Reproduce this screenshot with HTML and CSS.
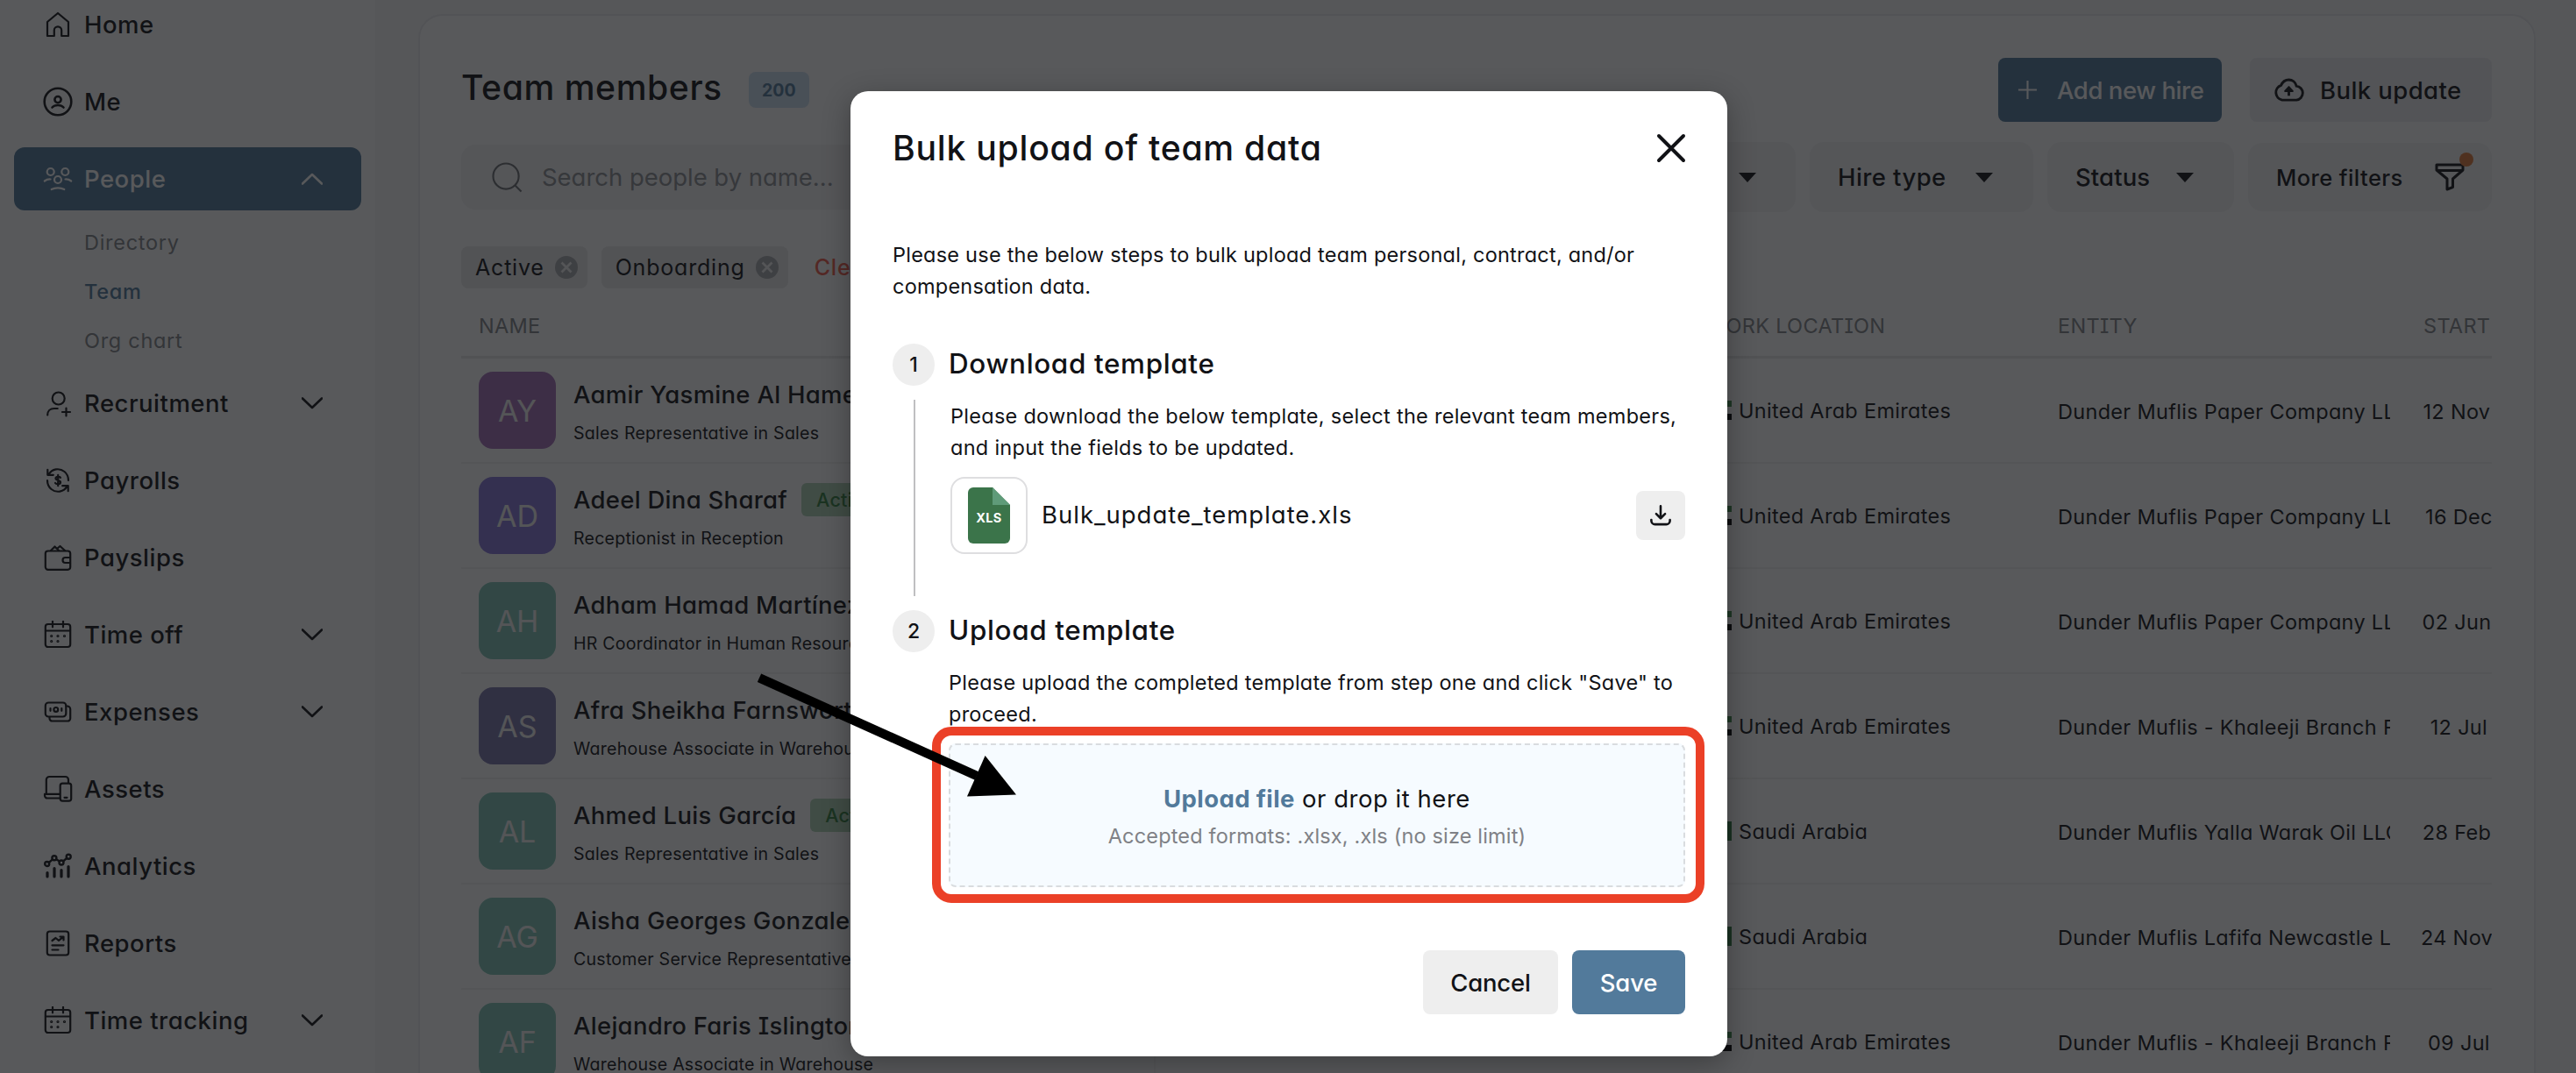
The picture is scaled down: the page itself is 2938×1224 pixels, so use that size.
FILE: index.html
```html
<!DOCTYPE html>
<html lang="en">
<head>
<meta charset="utf-8">
<title>Team members</title>
<link rel="stylesheet" href="styles.css">
</head>
<body>
<svg class="sprite" aria-hidden="true">
  <symbol id="chev-down" viewBox="0 0 24 14"><path d="M1 1.500l11 10.500 11-10.500" stroke-width="2.600"/></symbol>
  <symbol id="chev-up" viewBox="0 0 24 14"><path d="M1 12.500l11-10.500 11 10.500" stroke-width="2.600"/></symbol>
  <symbol id="calendar" viewBox="0 0 32 32"><rect x="1.800" y="4" width="28.400" height="26" rx="3"/><path d="M2 11.500h28M10 .8v6.500M22 .8v6.500"/><g stroke-width="1.200"><circle cx="8.700" cy="17.500" r="1"/><circle cx="16" cy="17.500" r="1"/><circle cx="23.500" cy="17.500" r="1"/><circle cx="8.700" cy="23.500" r="1"/><circle cx="16" cy="23.500" r="1"/></g></symbol>
  <symbol id="remove" viewBox="0 0 26 26"><circle class="remove-disc" cx="13" cy="13" r="13"/><path d="M7.500 7.500l11 11M18.500 7.500l-11 11" stroke="#f1f1f2" stroke-width="2.800"/></symbol>
</svg>

<div class="app">
  <nav class="sidebar">
    <a class="item"><svg class="ico" viewBox="0 0 32 32"><path d="M4 29V13L16 3l12 10v16h-7.800v-6.500a4.200 4.200 0 0 0-8.400 0V29z"/></svg><span>Home</span></a>
    <a class="item"><svg class="ico" viewBox="0 0 32 32"><g stroke-width="2.600"><circle cx="16" cy="16" r="15.300"/><circle cx="16" cy="13.600" r="3.600"/><path d="M9.500 22.500c3-3.300 10-3.300 13 0"/></g></svg><span>Me</span></a>
    <a class="item active"><svg class="ico" viewBox="0 0 32 32"><circle cx="7.700" cy="8" r="4"/><circle cx="24.300" cy="8" r="4"/><circle cx="16" cy="17" r="4"/><path d="M.8 18.500c2-1.500 4-2.200 6.700-2M31.200 18.500c-2-1.500-4-2.200-6.700-2M8.700 28c4-2.300 10.600-2.300 14.600 0"/></svg><span>People</span><svg class="chev"><use href="#chev-up"/></svg></a>
    <div class="sub">
      <a>Directory</a>
      <a class="current">Team</a>
      <a>Org chart</a>
    </div>
    <a class="item"><svg class="ico" viewBox="0 0 32 32"><circle cx="16.700" cy="10.500" r="7"/><path d="M4.200 29.500c0-4.500 3-7.500 7.500-7.500h4M25.500 21.500v9M21 26h9"/></svg><span>Recruitment</span><svg class="chev"><use href="#chev-down"/></svg></a>
    <a class="item"><svg class="ico" viewBox="0 0 32 32"><path d="M5.500 9.500C9 2.500 18 1.500 23.500 6c3 2.500 4.500 6 4.500 10M26.500 22.500c-3.500 7-12.500 8-18 3.500-3-2.500-4.500-6-4.500-10M4.300 3.800v6h6.500M27.700 28.200v-6h-6.500"/><path d="M19 12.800c-.8-1.300-5.500-1.500-5.500 1 0 2.600 5.500 1.600 5.500 4.400 0 2.500-5 2.400-6 .8M16.200 9.800v12.400"/></svg><span>Payrolls</span></a>
    <a class="item"><svg class="ico" viewBox="0 0 32 32"><rect x="1.800" y="8.500" width="28.400" height="21.300" rx="3"/><path d="M30 16h-5.500a2.900 2.900 0 0 0 0 6H30M8 8l4.500-4.500L17 8M15.500 5.500l3-2.500L24 8"/></svg><span>Payslips</span></a>
    <a class="item"><svg class="ico"><use href="#calendar"/></svg><span>Time off</span><svg class="chev"><use href="#chev-down"/></svg></a>
    <a class="item"><svg class="ico" viewBox="0 0 32 32"><rect x="1.800" y="5.500" width="23.500" height="16" rx="3.500"/><path d="M25.500 9.500h1.200a3.500 3.500 0 0 1 3.500 3.500v10.500a3 3 0 0 1-3 3H9.500a3 3 0 0 1-3-3v-1.500M7.500 12v2.800M20.300 12v2.800"/><circle cx="13.800" cy="13.400" r="2.400"/></svg><span>Expenses</span><svg class="chev"><use href="#chev-down"/></svg></a>
    <a class="item"><svg class="ico" viewBox="0 0 32 32"><path d="M2.800 21.500V5.500a3.500 3.500 0 0 1 3.500-3.500h18.200a3.500 3.500 0 0 1 3.500 3.500v3M18 21.800H1v1.700a3 3 0 0 0 3 3h14.500"/><rect x="18.700" y="9.700" width="12.500" height="20" rx="2.600"/><path d="M23.500 25.800h3"/></svg><span>Assets</span></a>
    <a class="item"><svg class="ico" viewBox="0 0 32 32"><g stroke-width="2.400"><circle cx="3.700" cy="13.500" r="2.500"/><circle cx="11.900" cy="6.800" r="2.500"/><circle cx="20" cy="12" r="2.500"/><circle cx="28.200" cy="5.300" r="2.500"/><path d="M5.700 12l4.200-3.600M14.200 8.200l3.700 2.400M22 10.500l4.200-3.600"/></g><path stroke-width="3.200" d="M4 23.500V28M12 18.500V28M20 20.500V28M28 16.500V28"/></svg><span>Analytics</span></a>
    <a class="item"><svg class="ico" viewBox="0 0 32 32"><rect x="3.800" y="2.500" width="24.400" height="27" rx="3"/><path d="M9.500 13l4-3 3.500 2.800 5-4M18.500 8.500h4v4M9.500 18.300h13M9.500 23.500h7"/></svg><span>Reports</span></a>
    <a class="item"><svg class="ico"><use href="#calendar"/></svg><span>Time tracking</span><svg class="chev"><use href="#chev-down"/></svg></a>
  </nav>

  <main class="card">
    <header class="top">
      <h1>Team members</h1>
      <span class="count">200</span>
      <button class="btn primary"><svg class="plus" viewBox="0 0 24 24"><path d="M12 1v22M1 12h22"/></svg><span class="t-add">Add new hire</span></button>
      <button class="btn grey"><svg class="cloud" viewBox="0 0 38 28"><path d="M11 26a9 9 0 0 1-1.300-17.300C11.500 4.500 15 2 19 2s8 2.800 9 7.500A8.300 8.300 0 0 1 28 26z"/><path d="M19 21v-8"/><path class="solid" d="M14.500 15.500L19 10.500l4.500 5z"/></svg><span class="t-bulk">Bulk update</span></button>
    </header>

    <div class="filters">
      <div class="search"><svg class="lens" viewBox="0 0 36 36"><circle cx="16.500" cy="16.500" r="15"/><path d="M27 27l7.500 7.500"/></svg><span>Search people by name...</span></div>
      <div class="select entity"><span>Entity</span><i class="caret"></i></div>
      <div class="select hire"><span>Hire type</span><i class="caret"></i></div>
      <div class="select status"><span>Status</span><i class="caret"></i></div>
      <div class="more"><span>More filters</span><span class="funnel-wrap"><svg class="funnel" viewBox="0 0 34 32"><path d="M2 2h30v6L20.500 18v9.500L14 30V18L2 8zM2 8.500h30"/></svg><i class="dot"></i></span></div>
    </div>

    <div class="chips">
      <span class="chip">Active<svg><use href="#remove"/></svg></span>
      <span class="chip">Onboarding<svg><use href="#remove"/></svg></span>
      <a class="clear">Clear all</a>
    </div>

    <section class="table">
      <div class="row head"><div>NAME</div><div></div><div>WORK LOCATION</div><div>ENTITY</div><div class="start">START DATE</div></div>

      <div class="row"><div class="who"><b class="av violet">AY</b><p><strong>Aamir Yasmine Al Hamed</strong><small>Sales Representative in Sales</small></p></div><div></div><div class="loc"><i class="flag uae"></i>United Arab Emirates</div><div class="ent">Dunder Muflis Paper Company LLC</div><div class="date">12 Nov 2023</div></div>
      <div class="row"><div class="who"><b class="av indigo">AD</b><p><strong>Adeel Dina Sharaf<em>Active</em></strong><small>Receptionist in Reception</small></p></div><div></div><div class="loc"><i class="flag uae"></i>United Arab Emirates</div><div class="ent">Dunder Muflis Paper Company LLC</div><div class="date">16 Dec 2021</div></div>
      <div class="row"><div class="who"><b class="av teal">AH</b><p><strong>Adham Hamad Martínez</strong><small>HR Coordinator in Human Resources</small></p></div><div></div><div class="loc"><i class="flag uae"></i>United Arab Emirates</div><div class="ent">Dunder Muflis Paper Company LLC</div><div class="date">02 Jun 2022</div></div>
      <div class="row"><div class="who"><b class="av slate">AS</b><p><strong>Afra Sheikha Farnsworth</strong><small>Warehouse Associate in Warehouse</small></p></div><div></div><div class="loc"><i class="flag uae"></i>United Arab Emirates</div><div class="ent">Dunder Muflis - Khaleeji Branch FZ</div><div class="date">12 Jul 2021</div></div>
      <div class="row"><div class="who"><b class="av teal">AL</b><p><strong>Ahmed Luis García<em>Active</em></strong><small>Sales Representative in Sales</small></p></div><div></div><div class="loc"><i class="flag ksa"></i>Saudi Arabia</div><div class="ent">Dunder Muflis Yalla Warak Oil LLC</div><div class="date">28 Feb 2022</div></div>
      <div class="row"><div class="who"><b class="av teal">AG</b><p><strong>Aisha Georges Gonzalez</strong><small>Customer Service Representative</small></p></div><div></div><div class="loc"><i class="flag ksa"></i>Saudi Arabia</div><div class="ent">Dunder Muflis Lafifa Newcastle L</div><div class="date">24 Nov 2022</div></div>
      <div class="row"><div class="who"><b class="av teal">AF</b><p><strong>Alejandro Faris Islington</strong><small>Warehouse Associate in Warehouse</small></p></div><div></div><div class="loc"><i class="flag uae"></i>United Arab Emirates</div><div class="ent">Dunder Muflis - Khaleeji Branch FZ</div><div class="date">09 Jul 2021</div></div>
    </section>
  </main>
</div>

<div class="overlay">
  <div class="modal" role="dialog">
    <header class="modal-head"><h2>Bulk upload of team data</h2><svg class="close" viewBox="0 0 32 32"><path d="M2 2l28 28M30 2L2 30"/></svg></header>
    <p class="intro">Please use the below steps to bulk upload team personal, contract, and/or<br>compensation data.</p>

    <section class="step first">
      <div class="rail"><span class="num">1</span><i class="line"></i></div>
      <div class="body">
        <h3>Download template</h3>
        <p>Please download the below template, select the relevant team members,<br>and input the fields to be updated.</p>
        <div class="file">
          <span class="thumb"><svg viewBox="0 0 48 64"><path fill="#3b744a" d="M7 0h21l20 20v38a6 6 0 0 1-6 6H6a6 6 0 0 1-6-6V6a6 6 0 0 1 6-6z"/><path fill="#5f9b79" d="M28 0l20 20H28z"/><text x="24" y="40" text-anchor="middle">XLS</text></svg></span>
          <span class="fname">Bulk_update_template.xls</span>
          <button class="dl"><svg viewBox="0 0 26 26"><path d="M13 1.500V16M7.500 11L13 16.500 18.500 11M1.500 18.500v1a4.500 4.500 0 0 0 4.500 4.500h14a4.500 4.500 0 0 0 4.500-4.500v-1"/></svg></button>
        </div>
      </div>
    </section>

    <section class="step second">
      <div class="rail"><span class="num">2</span></div>
      <div class="body">
        <h3>Upload template</h3>
        <p>Please upload the completed template from step one and click "Save" to<br>proceed.</p>
        <div class="drop">
          <div class="drop-title"><a>Upload file</a> <span>or drop it here</span></div>
          <div class="drop-note">Accepted formats: .xlsx, .xls (no size limit)</div>
          <i class="highlight"></i>
        </div>
      </div>
    </section>

    <footer><button class="btn cancel">Cancel</button><button class="btn save">Save</button></footer>
  </div>
</div>

<svg class="arrow" viewBox="0 0 310 150"><path d="M8 9.300L256 121" stroke="#000" stroke-width="10.500"/><path d="M265.600 98L301 142.500 245 144.500z" fill="#000"/></svg>
</body>
</html>
```
FILE: styles.css
```css
* { box-sizing: border-box; }
html, body { margin: 0; height: 1224px; overflow: hidden; }
body {
  position: relative;
  background: #f7f7f8;
  color: #111216;
  font-family: Inter, "Noto Sans", sans-serif;
  font-size: 27.500px;
  letter-spacing: .015em;
  font-feature-settings: "cv11", "cv08";
}
h1, h2, h3, p { margin: 0; font-weight: 500; }
svg { fill: none; stroke: currentColor; stroke-width: 2.200; flex: none; overflow: visible; }
button { border: 0; font: inherit; letter-spacing: inherit; color: inherit; padding: 0; font-feature-settings: inherit; }
.sprite { display: none; }
.app { display: flex; height: 1224px; overflow: hidden; }

/* sidebar */
.sidebar { width: 428px; height: 1240px; margin-top: -8px; padding: 0 16px; background: #fff; display: flex; flex-direction: column; gap: 16px; flex: none; }
.item { height: 72px; flex: none; display: flex; align-items: center; padding: 0 44px 0 34px; border-radius: 12px; font-weight: 500; letter-spacing: .018em; }
.item .ico { width: 32px; height: 32px; margin-right: 14px; stroke-linejoin: round; stroke-linecap: round; }
.item .chev { width: 24px; height: 14px; margin-left: auto; stroke-linecap: round; stroke-linejoin: round; }
.item.active { background: #527a9b; color: #fff; }
.sub { display: flex; flex-direction: column; margin: -8px 0; padding-left: 80px; font-size: 23.500px; letter-spacing: .03em; color: #83858a; }
.sub a { height: 56px; display: flex; align-items: center; }
.sub .current { color: #527a9b; font-weight: 500; }

/* card */
.card { width: 2415px; height: 1300px; margin: 16px 0 0 49px; padding: 48px 48px 0 47px; border: 2px solid #ebebed; border-radius: 28px; background: #fff; flex: none; }
.top { display: flex; align-items: center; height: 73px; }
h1 { font-size: 39.200px; padding-bottom: 7px; letter-spacing: .014em; white-space: nowrap; }
.count { width: 69px; height: 41px; margin: 0 auto 0 30px; border-radius: 8px; background: #cddff0; color: #527a9b; font-size: 19.500px; font-weight: 700; letter-spacing: 0; display: flex; align-items: center; justify-content: center; }
.btn { height: 73px; border-radius: 8px; display: flex; align-items: center; font-weight: 500; white-space: nowrap; }
.primary { width: 255px; padding-left: 22px; background: #527a9b; color: #fff; }
.plus { width: 23px; height: 23px; margin-right: 22px; }
.t-add { letter-spacing: -.016em; }
.grey { width: 276px; margin-left: 32px; padding-left: 26px; background: #efeff0; }
.cloud { width: 37px; height: 27px; margin-right: 17px; stroke-width: 3; }
.cloud .solid { fill: currentColor; stroke-linejoin: round; stroke-width: 2; }

.filters { display: flex; align-items: center; gap: 16px; margin-top: 23px; height: 80px; }
.search { flex: 1; height: 74px; border-radius: 16px; background: #f5f5f6; display: flex; align-items: center; padding-left: 35px; color: #8d8f94; letter-spacing: -.001em; }
.lens { width: 35px; height: 35px; margin-right: 22px; color: #6d6f74; }
.select { height: 80px; border-radius: 16px; background: #f5f5f6; font-weight: 500; display: flex; align-items: center; justify-content: space-between; padding: 0 46px 0 32px; white-space: nowrap; }
.entity { width: 247px; padding-right: 45px; }
.hire { width: 255px; }
.status { width: 213px; letter-spacing: .004em; }
.caret { border: 10px solid transparent; border-top: 11px solid #111216; border-bottom: 0; }
.more { width: 278px; height: 78px; border-radius: 16px; background: #f5f5f6; display: flex; align-items: center; justify-content: space-between; padding: 0 31px 0 32px; font-size: 25.500px; font-weight: 500; letter-spacing: .016em; }
.funnel-wrap { position: relative; display: flex; }
.funnel { width: 34px; height: 32px; stroke-width: 3; stroke-linejoin: round; }
.dot { position: absolute; left: 28px; top: -12px; width: 16px; height: 16px; border-radius: 50%; background: #e07b39; }

.chips { display: flex; align-items: center; gap: 16px; margin-top: 39px; height: 48px; font-size: 25px; letter-spacing: .032em; }
.chip { height: 48px; display: flex; align-items: center; gap: 12px; padding: 0 11px 0 16px; border-radius: 8px; background: #e9e9ea; }
.chip svg { width: 26px; height: 26px; }
.remove-disc { fill: #a9aaad; stroke: none; }
.clear { color: #f25a4a; margin-left: 14px; font-weight: 500; }

/* table: the last column runs past the card and is clipped */
.table { margin-top: 8px; font-size: 23.500px; letter-spacing: .013em; overflow: hidden; }
.row { display: grid; grid-template-columns: 792px 607px 402px 415px 186px; height: 120px; width: 2402px; border-bottom: 2px solid #f0f0f1; white-space: nowrap; }
.row > div { padding: 0 16px 0 20px; display: flex; align-items: center; overflow: hidden; }
.row > div:first-child { border-right: 2px solid #f3f3f4; }
.row.head { height: 72px; border-bottom: 3px solid #e6e6e8; color: #83858a; }
.row.head > div:first-child { border-right: 0; }
.row .start { padding: 0 0 0 22px; }
.av { width: 88px; height: 88px; border-radius: 16px; color: #f1f1f2; font-weight: 400; font-size: 34px; letter-spacing: 0; display: flex; align-items: center; justify-content: center; flex: none; }
.violet { background: #a56fb9; }
.indigo { background: #8677d9; }
.teal { background: #7fc4b4; }
.slate { background: #7a75ab; }
.who p { margin-left: 20px; padding-top: 3px; display: flex; flex-direction: column; gap: 8px; }
.who strong { height: 40px; font-size: 27.500px; font-weight: 500; letter-spacing: .010em; display: flex; align-items: center; }
.who small { font-size: 19.600px; line-height: 32px; font-weight: 400; letter-spacing: .011em; }
.who em { font-style: normal; height: 38px; margin-left: 16px; padding: 0 17px; border-radius: 6px; background: #b0d2b5; color: #32803f; font-size: 21.500px; display: flex; align-items: center; }
.flag { width: 30px; height: 22px; margin-right: 8px; flex: none; }
.uae { background: linear-gradient(90deg, #d9343f 8px, transparent 8px), linear-gradient(#3d8a4b 33%, #fff 33% 66%, #000 66%); }
.ksa { background: #2f7a42; }
.row .ent { padding: 2px 0 0 20px; margin-right: 16px; }
.row .date { padding: 2px 0 0; justify-content: center; }

/* overlay and modal */
.overlay { position: absolute; inset: 0; background: rgba(17, 18, 22, .7); display: flex; justify-content: center; align-items: flex-start; padding: 104px 0 0 2px; }
.modal { width: 1000px; height: 1100.500px; padding: 0 48px; background: #fff; border-radius: 20px; box-shadow: 0 8px 32px rgba(0, 0, 0, .3); }
.modal-head { display: flex; align-items: center; justify-content: space-between; height: 129px; }
h2 { font-size: 39.200px; letter-spacing: .019em; }
.close { width: 32px; height: 32px; stroke-width: 4; stroke-linecap: round; }
.intro, .body p { font-size: 23.500px; line-height: 36px; font-weight: 400; letter-spacing: .0118em; white-space: nowrap; }
.intro { margin-top: 40px; letter-spacing: .0098em; }
.step { display: flex; gap: 18px; }
.first { margin-top: 47px; height: 304px; }
.rail { width: 48px; display: flex; flex-direction: column; align-items: center; }
.num { width: 48px; height: 48px; border-radius: 50%; background: #eee; display: flex; align-items: center; justify-content: center; font-size: 23px; font-weight: 500; letter-spacing: 0; flex: none; }
.line { width: 2px; height: 224px; margin: 16px 0 0 2px; background: #bfbfc1; }
.body { flex: 1; }
h3 { font-size: 31.400px; line-height: 47px; padding-bottom: 1px; letter-spacing: .021em; margin-left: -2px; }
.body p { margin-top: 17px; }
.file { display: flex; align-items: center; margin-top: 15px; }
.thumb { width: 88px; height: 88px; border: 2px solid #dedee0; border-radius: 16px; display: flex; align-items: center; justify-content: center; }
.thumb svg { width: 48px; height: 64px; stroke: none; }
.thumb text { fill: #fff; font: 700 14.500px Inter, sans-serif; letter-spacing: .02em; }
.fname { margin-left: 16px; padding-bottom: 3px; letter-spacing: .036em; flex: 1; }
.dl { width: 56px; height: 56px; border-radius: 8px; background: #eee; display: flex; align-items: center; justify-content: center; }
.dl svg { width: 24px; height: 26px; stroke-width: 2.800; stroke-linecap: round; stroke-linejoin: round; }
.second { gap: 16px; }
.second h3 { margin-left: 0; }
.second p { letter-spacing: .0105em; }
.drop { position: relative; height: 164px; margin-top: 15px; border: 2px dashed #d9dcdf; border-radius: 8px; background: #f6fbff; text-align: center; padding-top: 39px; }
.drop-title { line-height: 44px; letter-spacing: .019em; }
.drop-title a { color: #527a9b; font-weight: 700; letter-spacing: .014em; }
.drop-note { font-size: 23.500px; line-height: 42px; color: #7f8186; letter-spacing: .007em; }
.highlight { position: absolute; left: -21px; top: -21px; width: 881px; height: 201px; border: 10px solid #eb4027; border-radius: 22px; }
.modal footer { display: flex; justify-content: flex-end; gap: 16px; margin-top: 72px; }
.modal .btn { justify-content: center; letter-spacing: -.008em; }
.cancel { width: 154px; background: #eee; }
.save { width: 129px; background: #527a9b; color: #fff; }

/* pointer drawn over the dialog */
.arrow { position: absolute; left: 858px; top: 764px; width: 310px; height: 150px; stroke: none; }
```
